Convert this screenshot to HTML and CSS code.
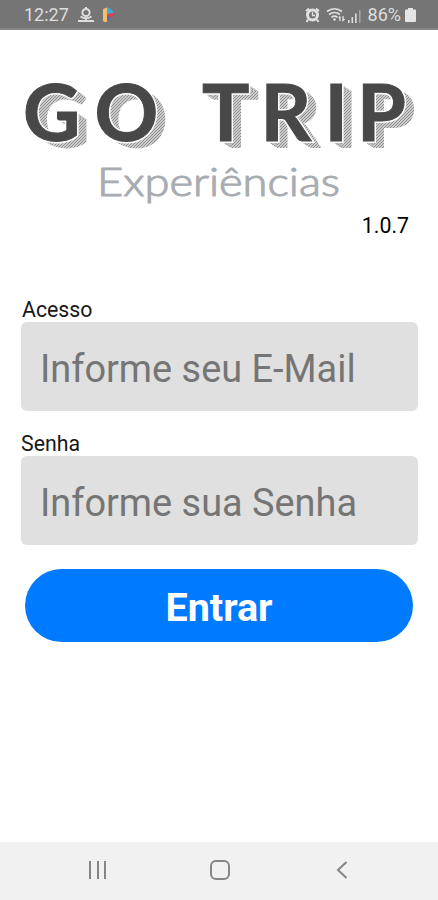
FILE: index.html
```html
<!DOCTYPE html>
<html lang="pt-BR">
<head>
<meta charset="utf-8">
<meta name="viewport" content="width=device-width, initial-scale=1">
<title>GO TRIP Experiências</title>
<link rel="stylesheet" href="styles.css">
</head>
<body>
<div class="screen">
  <header class="status">
    <span class="clock">12:27</span>
    <svg class="pin" width="18" height="16" viewBox="0 0 18 16" fill="none" stroke="#dedede" stroke-width="2"><circle cx="9" cy="5.500" r="3.600"/><path d="M9 0v2M1 14h16M9 11v3M3.500 9.500Q9 13 14.500 9.500"/></svg>
    <svg class="play" width="13" height="16" viewBox="0 0 13 16"><path d="M1 2L5 .5V15H2.500L1 14z" fill="#f5bd68"/><path d="M5 .5Q9 1 12 6L5 8z" fill="#35aee8"/><path d="M5 7l7.500-1.500Q13 8 10 10L5 12z" fill="#d8434e"/><path d="M5 8l4 3-4 3z" fill="#5267b5"/></svg>
    <span class="spacer"></span>
    <svg class="alarm" width="15" height="16" viewBox="0 0 15 16" fill="none" stroke="#e2e2e2"><circle cx="7.500" cy="8" r="5" stroke-width="3"/><path d="M1 4l3-2.500M14 4l-3-2.500M3 12.500L1.500 15M12 12.500l1.500 2.500" stroke-width="2"/><path d="M7.500 5v3.500H10" stroke-width="1.300"/></svg>
    <svg class="wifi" width="20" height="16" viewBox="0 0 20 16" fill="none" stroke="#e2e2e2" stroke-width="1.700"><path d="M1 4.500Q8.500-1 16 4.500M3 7.500Q8.500 3.500 14 7.500M5.500 10.300Q8.500 8 11.500 10.300"/><circle cx="8.500" cy="12.500" r="1.300" fill="#e2e2e2" stroke="none"/><path d="M14 14V9.500M12.800 11L14 9.500M17 9v4.500l1.500-1.500" stroke-width="1.300"/></svg>
    <svg class="signal" width="14" height="14" viewBox="0 0 14 14" fill="#dedede"><path d="M0 11h1.600v3H0zM3.500 8h1.600v6H3.500zM7 4.500h1.600V14H7z"/><path d="M11 1h1.600v13H11z" opacity=".45"/></svg>
    <span class="percent">86%</span>
    <svg class="battery" width="11" height="14" viewBox="0 0 11 14" fill="#e5e5e5"><path d="M3 0h5v1.500h2q1 0 1 1V13q0 1-1 1H1q-1 0-1-1V2.500q0-1 1-1h2z"/></svg>
  </header>

  <main class="login">
    <svg class="logo" width="438" height="182" viewBox="0 30 438 182" role="img" aria-label="GO TRIP Experiências">
      <defs>
        <pattern id="hatch" width="3" height="3" patternUnits="userSpaceOnUse"><rect width="3" height="3" fill="#ccc"/><path d="M-1 1L1-1M0 3L3 0M2 4L4 2" stroke="#8e8e8e" stroke-width="1"/></pattern>
        <text id="name" class="name" y="141" x="23 94.500 160 202 260.500 324.500 357">GO TRIP</text>
      </defs>
      <g fill="url(#hatch)">
        <use href="#name" x="3" y="2"/><use href="#name" x="4" y="3"/><use href="#name" x="5" y="3.700"/><use href="#name" x="6" y="4.400"/><use href="#name" x="7" y="5"/><use href="#name" x="8" y="5.700"/><use href="#name" x="9" y="6.400"/><use href="#name" x="10" y="7"/>
      </g>
      <use href="#name" fill="#fff" stroke="#fff" stroke-width="4"/>
      <use href="#name" fill="#484848" stroke="#484848" stroke-width="1"/>
      <text class="tagline" x="97" y="196" textLength="243" lengthAdjust="spacingAndGlyphs">Experiências</text>
    </svg>
    <p class="version">1.0.7</p>
    <form class="form">
      <label class="label" for="email">Acesso</label>
      <input class="field" id="email" type="email" placeholder="Informe seu E-Mail">
      <label class="label second" for="senha">Senha</label>
      <input class="field" id="senha" type="password" placeholder="Informe sua Senha">
      <button class="enter" type="button">Entrar</button>
    </form>
  </main>

  <nav class="nav">
    <svg width="20" height="20" viewBox="0 0 20 20" stroke="#858585" stroke-width="2"><path d="M2 1v18M10 1v18M17 1v18"/></svg>
    <svg width="20" height="20" viewBox="0 0 20 20" fill="none" stroke="#858585" stroke-width="2"><rect x="1" y="1" width="18" height="18" rx="5"/></svg>
    <svg width="20" height="20" viewBox="0 0 20 20" fill="none" stroke="#858585" stroke-width="2"><path d="M14.500 2L6 10l8.500 8"/></svg>
  </nav>
</div>
</body>
</html>
```
FILE: styles.css
```css
* { box-sizing: border-box; }
body { margin: 0; background: #fff; font-family: Roboto, "Liberation Sans", sans-serif; }
.screen { display: flex; flex-direction: column; height: 900px; width: 438px; overflow: hidden; }
.status { display: flex; align-items: center; height: 30px; padding: 1px 22px 0 24px; background: #757575; border-bottom: 2px solid #858585; color: #dedede; font-size: 18px; flex: none; }
.pin { margin-left: 8px; }
.play { margin-left: 7px; }
.spacer { flex: 1; }
.wifi { margin-left: 6px; }
.signal { margin: 2px 6px 0 2px; }
.battery { margin-left: 4px; }
.login { flex: 1; }
.logo { display: block; }
.name { font: 700 79px Lato, sans-serif; }
.tagline { font: 300 39px Lato, sans-serif; fill: #a8acb1; stroke: #a8acb1; stroke-width: 1.100px; stroke-linejoin: round; }
.version { margin: 0; padding: 0 29px 0 0; height: 26px; line-height: 27px; text-align: right; font-size: 21.300px; }
.form { display: flex; flex-direction: column; padding: 59px 20px 0 21px; }
.label { height: 25px; line-height: 25px; font-size: 21.300px; padding-left: 1px; color: #181818; }
.second { margin-top: 20px; padding-left: 0; }
.field { height: 89px; width: 397px; border: 0; border-radius: 6px; background: #e0e0e0; padding: 5px 18px 0 19px; font: 37.900px Roboto, sans-serif; }
.field::placeholder { color: #757575; opacity: 1; }
.enter { height: 73px; width: 388px; margin: 24px 0 0 4px; padding: 4px 0 0; border: 0; border-radius: 37px; background: #007aff; color: #fff; font: 700 39.500px Roboto, sans-serif; }
.nav { display: flex; justify-content: space-between; align-items: center; height: 58px; padding: 0 86px 2px 88px; background: #f1f1f1; flex: none; }
```
